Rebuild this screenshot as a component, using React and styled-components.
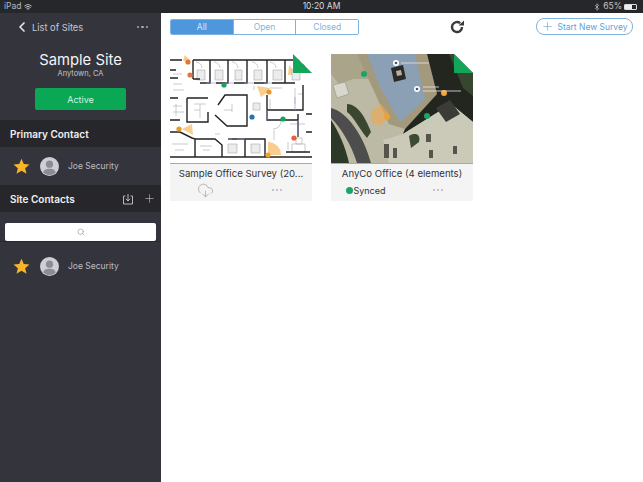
import React from "react";
import styled, { createGlobalStyle } from "styled-components";
import { ChevronLeft, Plus, Search, CloudDownload, Bluetooth, Wifi } from "lucide-react";

const Global = createGlobalStyle`
  html, body { margin: 0; padding: 0; background: #fff; }
  body { font-family: "Inter", "Liberation Sans", sans-serif; overflow: hidden; }
  #root { width: 643px; height: 482px; }
`;
const Page = styled.div`width:643px;height:482px;display:flex;flex-direction:column;background:#fff;overflow:hidden;`;
const StatusBar = styled.div`height:13px;flex:none;background:#26272b;color:#d8d8da;display:grid;grid-template-columns:1fr auto 1fr;align-items:center;padding:0 4px;font-size:8.5px;line-height:13px;`;
const StatusLeft = styled.div`display:flex;align-items:center;gap:3px;color:#b9b9bd;`;
const StatusRight = styled.div`display:flex;align-items:center;justify-content:flex-end;gap:2px;color:#c4c4c8;padding-right:2px;`;
const Battery = styled.span`width:13px;height:6px;border:1px solid #ddd;border-radius:1px;box-sizing:border-box;display:block;background:linear-gradient(90deg,#eee 65%,transparent 65%);`;
const Body = styled.div`flex:1;display:flex;min-height:0;`;
const Side = styled.aside`width:161px;flex:none;background:#33343c;color:#fff;display:flex;flex-direction:column;`;
const NavRow = styled.div`height:28px;display:flex;align-items:center;padding:0 13px 0 14px;color:#c8c8cc;font-size:9.3px;`;
const NavLabel = styled.span`flex:1;margin-left:2px;`;
const Dots = styled.span`display:flex;gap:${p=>p.$gap||2}px;align-items:center;`;
const Dot = styled.i`display:block;width:${p=>p.$s||2.5}px;height:${p=>p.$s||2.5}px;border-radius:50%;background:${p=>p.$c||"#a9a9ae"};`;
const SiteTitle = styled.div`text-align:center;font-size:14.8px;line-height:20px;margin-top:9px;color:#f3f3f4;`;
const SiteSub = styled.div`text-align:center;font-size:7.5px;line-height:12px;color:#c4c4c8;margin-top:-2px;`;
const Active = styled.div`margin:8px 35px 0;height:22px;border-radius:2px;background:#0aa854;color:#d7f3e2;font-size:9px;display:flex;align-items:center;justify-content:center;`;
const Section = styled.div`height:27px;background:#27272b;display:flex;align-items:center;padding:0 5px 0 10px;font-size:10px;font-weight:600;color:#f0f0f0;gap:9px;margin-top:${p=>p.$mt||0}px;`;
const SectionLabel = styled.span`flex:1;`;
const Contact = styled.div`height:${p=>p.$h||38}px;display:flex;align-items:center;padding-left:13px;font-size:8.5px;color:#bdbdc2;`;
const Avatar = styled.svg`width:19px;height:19px;margin:0 9px 0 10px;flex:none;`;
const StarIcon = styled.svg`width:17px;height:17px;flex:none;`;
const SearchBar = styled.div`height:30px;display:flex;align-items:flex-end;padding:0 5px;border-bottom:1px solid #28282c;box-sizing:border-box;`;
const SearchBox = styled.div`flex:1;height:18px;border-radius:2px;background:#fff;display:flex;align-items:center;justify-content:center;color:#9a9a9f;`;
const Main = styled.main`flex:1;padding:6px 9px;min-width:0;`;
const Toolbar = styled.div`height:16px;display:flex;align-items:center;`;
const Segments = styled.div`display:flex;width:189px;height:16px;border:1px solid #7fb1dd;border-radius:2px;box-sizing:border-box;overflow:hidden;`;
const Segment = styled.div`flex:1;display:flex;align-items:center;justify-content:center;font-size:8.5px;background:${p=>p.$on?"#4f97dc":"#fff"};color:${p=>p.$on?"#d5e6f6":"#82b3de"};border-left:${p=>p.$first?"0":"1px solid #7fb1dd"};`;
const Refresh = styled.svg`margin-left:90px;width:16px;height:16px;flex:none;`;
const NewButton = styled.div`margin-left:auto;margin-right:1px;width:97px;height:17px;box-sizing:border-box;border:1px solid #7fb3de;border-radius:8px;display:flex;align-items:center;justify-content:center;gap:3px;color:#5f9fd6;font-size:8.5px;margin-top:-1px;`;
const Cards = styled.div`display:flex;gap:19px;margin-top:19px;`;
const Card = styled.article`width:142px;height:147px;background:#f4f4f5;display:flex;flex-direction:column;position:relative;`;
const Picture = styled.svg`width:142px;height:109px;display:block;border-bottom:1.5px solid #86b4d8;flex:none;`;
const CardTitle = styled.div`text-align:center;font-size:9.6px;line-height:12px;margin-top:4px;color:#333;white-space:nowrap;`;
const CardFoot = styled.div`flex:1;display:grid;grid-template-columns:1fr 1fr;align-items:center;justify-items:center;padding-bottom:1px;`;
const Synced = styled.div`display:flex;align-items:center;font-size:9px;color:#333;margin-left:-1px;`;
const SyncDot = styled.i`display:block;width:7px;height:7px;border-radius:50%;background:#19a568;`;
const Corner = styled.svg`position:absolute;top:0;right:0;width:19px;height:19px;`;

const GoldStar = () => (
  <StarIcon viewBox="0 0 20 20"><path d="M10 .8l2.700 6.200 6.700.6-5.100 4.400 1.600 6.600-5.900-3.500-5.900 3.500 1.600-6.600L.6 7.600l6.700-.6z" fill="#f7b52c"/></StarIcon>
);
const Person = () => (
  <Avatar viewBox="0 0 20 20">
    <circle cx="10" cy="10" r="10" fill="#cdcfd5"/>
    <circle cx="10" cy="7.500" r="3.800" fill="#8b8d94"/>
    <path d="M3.500 16.500c.4-3.200 3-4.200 6.500-4.200s6.100 1 6.500 4.200A9.500 9.500 0 0 1 10 19a9.500 9.500 0 0 1-6.500-2.500z" fill="#8b8d94"/>
  </Avatar>
);
const walls = "M0 6H12M0 16H6M23 6V25M23 25H30M23 6H134M40 6V29H30M58 6V29H46M77 6V29H64M97 6V29H84M115 6V29H102M134 6V18M133 31V56H97M115 29H125M97 41V66H128V83M128 66V60M48 51L55 41H77V72H57L45 61M17 44H38M17 44V68H38V58M0 78H10L22 84L25 85H45L52 91V103M25 85V103M58 85H95V103M75 85V103M0 103H142M116 98H140M0 44H8M0 66H10M0 24H8M136 60H142M136 78H142";
const FloorPlan = () => (
  <Picture viewBox="0 0 142 109" preserveAspectRatio="none">
    <rect width="142" height="109" fill="#fff"/>
    <path d="M118 21L127 20L119 11Z M87 32L100 34L98 38L91 43Z M12 75L22 70L23 81Z M98 101V88A13 13 0 0 1 111 101Z M15 1L20 6L19 10L13 6Z" fill="#f9cd8e"/>
    <path d="M3 20H12M3 30H12M3 36H14M6 50V62M3 52H12M3 58H14M24 50H36M24 56H30M30 50V64M84 32V36M100 34H112M125 34V50M128 40H133M104 76V86M118 88V96M122 90H135V98H122ZM126 84H132V90H126ZM100 45V55M103 75A8 8 0 0 0 111 66M45 80H50M2 90H18M5 96H14M30 92H42M33 96H40M54 56H62M62 50V58M120 70H135M26 8A6 6 0 0 1 32 14M44 8A6 6 0 0 1 50 14M62 8A6 6 0 0 1 68 14M82 8A6 6 0 0 1 88 14M100 8A6 6 0 0 1 106 14" fill="none" stroke="#b5b5b8" strokeWidth=".7"/>
    <path d="M27 16h8v10h-8zM45 16h8v10h-8zM65 16h7v10h-7zM84 16h8v10h-8zM103 16h9v10h-9zM122 16h8v10h-8zM83 49h7v7h-7zM58 90h9v9h-9zM81 90h9v9h-9z" fill="#ececec" stroke="#999" strokeWidth=".5"/>
    <path d={walls} fill="none" stroke="#222224" strokeWidth="1.400"/>
    <path d="M36 29H46M55 29H64M74 29H84M94 29H102M125 43V56M97 66V56M128 83V66M58 85H62M67 85H75" fill="none" stroke="#9b9bd8" strokeWidth=".7"/>
    <circle cx="18" cy="8" r="2.600" fill="#e5763b"/>
    <circle cx="20" cy="21" r="2.600" fill="#e5763b"/>
    <circle cx="54" cy="31" r="2.600" fill="#12a35f"/>
    <circle cx="99" cy="38" r="2.600" fill="#e89a2d"/>
    <circle cx="82" cy="63" r="2.600" fill="#2671b8"/>
    <circle cx="113" cy="65" r="2.600" fill="#12a35f"/>
    <circle cx="124" cy="84" r="2.600" fill="#e5603b"/>
    <circle cx="9" cy="75" r="2.600" fill="#e89a2d"/>
    <circle cx="98" cy="101" r="2.600" fill="#f0a030"/>
  </Picture>
);
const Aerial = () => (
  <Picture viewBox="0 0 142 109" preserveAspectRatio="none">
    <rect width="142" height="109" fill="#bcb9a4"/>
    <path d="M0 0H26L40 25H22L8 30L0 20Z" fill="#aaa58a"/>
    <path d="M0 54C16 58 32 80 40 109H26C20 90 10 74 0 64Z" fill="#4c4d4c"/>
    <path d="M16 50C26 50 34 62 40 78L36 84C28 74 22 62 16 58Z" fill="#3b4630"/>
    <path d="M0 66C8 78 14 92 18 109H0Z" fill="#2c3828"/>
    <path d="M2 31L14 28L18 40L6 44Z" fill="#d8d7cb" stroke="#8b8b80" strokeWidth=".5"/>
    <path d="M26 0H96L106 40L74 75L58 70Z" fill="#a3997d"/>
    <path d="M36 0H84L94 46L69 68L49 33Z" fill="#8ba0b4"/>
    <path d="M60 14L72 11L75 25L63 28Z" fill="#2a2a28"/>
    <path d="M65 17L70 16L71 21L66 22Z" fill="#b7b0a0"/>
    <path d="M96 0H142V68L120 50L72 80L74 75L106 40Z" fill="#22261f"/>
    <path d="M118 0H142V42L132 34Z" fill="#37462f"/>
    <path d="M72 80L120 50L142 68V109H58L52 86Z" fill="#cbc9b7"/>
    <path d="M105 54l14-8 10 14-14 8zM110 58l6-3 4 6-6 3z" fill="#3c3c36"/>
    <path d="M53 90h5v14h-5zM62 94h4v10h-4zM95 80h5v8h-5zM98 96h4v8h-4zM122 92h4v8h-4z" fill="#55554e"/>
    <path d="M78 82C84 78 90 80 88 88L80 94Z" fill="#3e4a33"/>
    <path d="M40 58L50 50L58 60L50 72L40 68Z" fill="#f4a94c" opacity=".6"/>
    <circle cx="113" cy="39" r="3" fill="#f3a53a"/>
    <circle cx="56" cy="63" r="3" fill="#f0a030"/>
    <circle cx="33" cy="20" r="3" fill="#19a568"/>
    <circle cx="96" cy="62" r="3" fill="#19a568"/>
    <circle cx="65" cy="9" r="3" fill="#fff"/><circle cx="65" cy="9" r="1.300" fill="#555"/>
    <circle cx="86" cy="35" r="3" fill="#fff"/><circle cx="86" cy="35" r="1.300" fill="#555"/>
    <path d="M70 9H98M92 33H108M92 37H130" stroke="#e8e8e8" strokeWidth="1.200" opacity=".8"/>
  </Picture>
);
const CornerMark = () => <Corner viewBox="0 0 19 19"><path d="M0 0L19 19V0Z" fill="#fff"/><path d="M0 0L19 19H0Z" fill="#13a65b"/></Corner>;
const MoreDots = () => <Dots $gap={2}><Dot $s={2} $c="#b5b5b8"/><Dot $s={2} $c="#b5b5b8"/><Dot $s={2} $c="#b5b5b8"/></Dots>;
const Import = () => (
  <svg width="12" height="12" viewBox="0 0 12 12" fill="none" stroke="#c8c8cc" strokeWidth=".9">
    <path d="M3.500 3H1.500V11H10.500V3H8.500M6 1V8M3.800 5.800L6 8L8.200 5.800"/>
  </svg>
);

export default function App() {
  return (
    <Page>
      <Global/>
      <StatusBar>
        <StatusLeft>iPad <Wifi size={8} strokeWidth={3}/></StatusLeft>
        <span>10:20 AM</span>
        <StatusRight><Bluetooth size={8}/>65%<Battery/></StatusRight>
      </StatusBar>
      <Body>
        <Side>
          <NavRow>
            <ChevronLeft size={16} strokeWidth={2.500} color="#e8e8ea"/>
            <NavLabel>List of Sites</NavLabel>
            <Dots><Dot/><Dot/><Dot/></Dots>
          </NavRow>
          <SiteTitle>Sample Site</SiteTitle>
          <SiteSub>Anytown, CA</SiteSub>
          <Active>Active</Active>
          <Section $mt={10}><SectionLabel>Primary Contact</SectionLabel></Section>
          <Contact><GoldStar/><Person/>Joe Security</Contact>
          <Section><SectionLabel>Site Contacts</SectionLabel><Import/><Plus size={13} strokeWidth={1} color="#d8d8dc"/></Section>
          <SearchBar><SearchBox><Search size={8}/></SearchBox></SearchBar>
          <Contact $h={48}><GoldStar/><Person/>Joe Security</Contact>
        </Side>
        <Main>
          <Toolbar>
            <Segments>
              <Segment $on $first>All</Segment>
              <Segment>Open</Segment>
              <Segment>Closed</Segment>
            </Segments>
            <Refresh viewBox="0 0 16 16" fill="none">
              <path d="M13 8A5 5 0 1 1 11.200 4.200" stroke="#3a3a3c" strokeWidth="2.400"/>
              <path d="M9.500 6.500H15V1.500Z" fill="#3a3a3c"/>
            </Refresh>
            <NewButton><Plus size={13} strokeWidth={1.100}/>Start New Survey</NewButton>
          </Toolbar>
          <Cards>
            <Card>
              <FloorPlan/><CornerMark/>
              <CardTitle>Sample Office Survey (20...</CardTitle>
              <CardFoot><CloudDownload size={17} strokeWidth={.8} color="#888"/><MoreDots/></CardFoot>
            </Card>
            <Card>
              <Aerial/><CornerMark/>
              <CardTitle>AnyCo Office (4 elements)</CardTitle>
              <CardFoot><Synced><SyncDot/>Synced</Synced><MoreDots/></CardFoot>
            </Card>
          </Cards>
        </Main>
      </Body>
    </Page>
  );
}
